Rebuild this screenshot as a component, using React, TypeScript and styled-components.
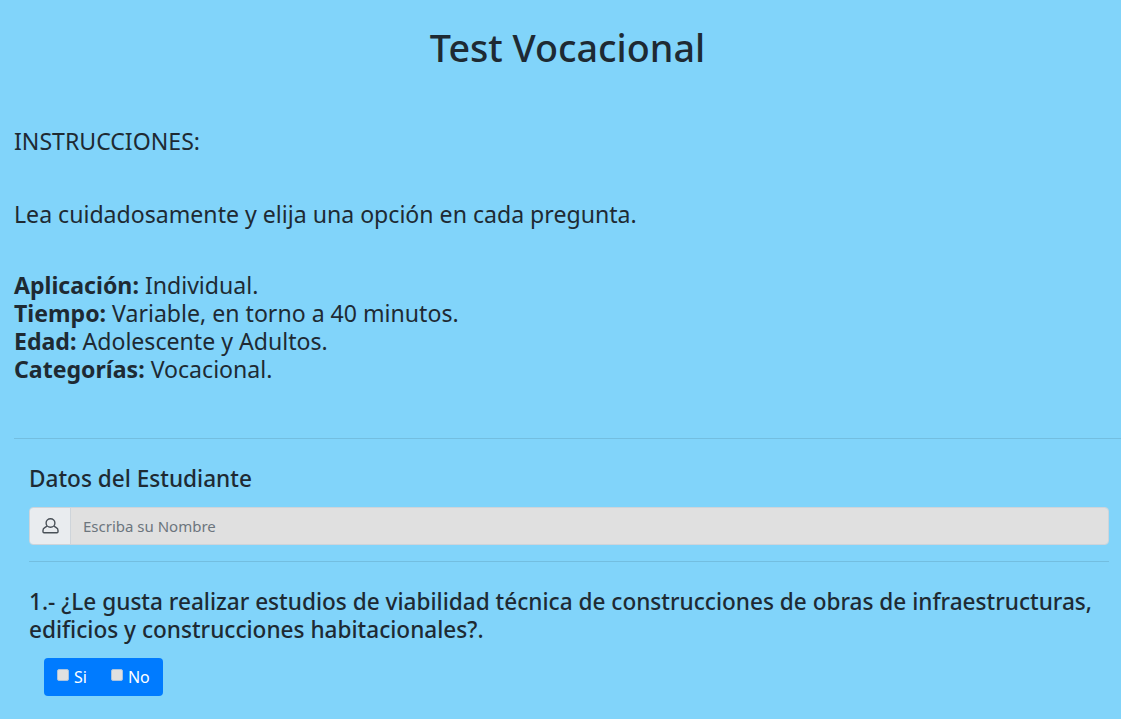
import { createGlobalStyle, styled } from "styled-components";

const GlobalStyle = createGlobalStyle`
	html, body {
		margin: 0;
		background: #81d4fa;
		color: #1e2a33;
		font-family: "Noto Sans", "Open Sans", sans-serif;
	}
	* {
		box-sizing: border-box;
	}
`;

const Page = styled.div`
	height: 719px;
	overflow: hidden;
	padding-left: 14px;
`;

const Title = styled.h1`
	margin: 0;
	padding-top: 24px;
	height: 127px;
	font-size: 37.7px;
	line-height: 48px;
	font-weight: 500;
	text-align: center;
`;

const Block = styled.p<{ $height: number }>`
	margin: 0;
	height: ${(p) => p.$height}px;
	font-size: 23.1px;
	line-height: 28px;
`;

const Rule = styled.hr<{ $inset?: boolean }>`
	margin: 0;
	border: 0;
	border-top: 1px solid rgba(0, 0, 0, 0.1);
	margin-right: ${(p) => (p.$inset ? "12px" : "0")};
`;

const Section = styled.section`
	padding: 24px 0 0 15px;
`;

const SectionTitle = styled.h5`
	margin: 0 0 12px;
	font-size: 22.6px;
	line-height: 32px;
	font-weight: 500;
`;

const InputGroup = styled.div`
	display: flex;
	height: 38px;
	margin-right: 12px;
	margin-bottom: 16px;
	border: 1px solid #ced4da;
	border-radius: 4px;
	overflow: hidden;
`;

const InputAddon = styled.span`
	display: flex;
	align-items: center;
	justify-content: center;
	width: 41px;
	flex: none;
	background: #e9ecef;
	border-right: 1px solid #ced4da;
	color: #495057;
`;

const NameInput = styled.input`
	flex: 1;
	border: 0;
	padding: 0 12px;
	background: #e0e0e0;
	font-family: inherit;
	font-size: 15px;
	outline: none;

	&::placeholder {
		color: #6c757d;
		opacity: 1;
	}
`;

const Question = styled.h5`
	margin: 0 12px 0 0;
	padding-top: 26px;
	font-size: 22.6px;
	line-height: 28px;
	font-weight: 500;
`;

const Answers = styled.div`
	display: inline-flex;
	align-items: center;
	gap: 24px;
	width: 119px;
	height: 38px;
	margin: 14px 0 0 15px;
	padding: 0 13px;
	background: #007bff;
	border-radius: 4px;
	color: #fff;
	font-size: 16px;
`;

const Answer = styled.label`
	display: flex;
	align-items: center;
	gap: 5px;
`;

const Check = styled.input`
	appearance: none;
	width: 12px;
	height: 12px;
	margin: 0 0 4px;
	background: #e0e0e0;
	border: 1px solid #a9c3df;
	border-radius: 2px;
`;

const UserIcon = () => (
	<svg width="17" height="16" viewBox="0 0 17 16" fill="none" stroke="currentColor" strokeWidth="1.4">
		<ellipse cx="8.5" cy="5" rx="4.4" ry="4.3" />
		<path d="M5 8.2 2.4 9.8C1.300 10.500 1 11.400 1 12.400v1.400c0 .6.4 1 1 1h13c.6 0 1-.4 1-1v-1.400c0-1-.3-1.900-1.400-2.600L12 8.200" />
	</svg>
);

export default function App() {
	return (
		<Page>
			<GlobalStyle />
			<Title>Test Vocacional</Title>
			<Block $height={73}>INSTRUCCIONES:</Block>
			<Block $height={71}>Lea cuidadosamente y elija una opción en cada pregunta.</Block>
			<Block $height={167}>
				<b>Aplicación:</b> Individual.
				<br />
				<b>Tiempo:</b> Variable, en torno a 40 minutos.
				<br />
				<b>Edad:</b> Adolescente y Adultos.
				<br />
				<b>Categorías:</b> Vocacional.
			</Block>
			<Rule />
			<Section>
				<SectionTitle>Datos del Estudiante</SectionTitle>
				<InputGroup>
					<InputAddon>
						<UserIcon />
					</InputAddon>
					<NameInput placeholder="Escriba su Nombre" />
				</InputGroup>
				<Rule $inset />
				<Question>
					1.- ¿Le gusta realizar estudios de viabilidad técnica de construcciones de obras de infraestructuras,
					edificios y construcciones habitacionales?.
				</Question>
				<Answers>
					<Answer>
						<Check type="checkbox" /> Si
					</Answer>
					<Answer>
						<Check type="checkbox" /> No
					</Answer>
				</Answers>
			</Section>
		</Page>
	);
}
